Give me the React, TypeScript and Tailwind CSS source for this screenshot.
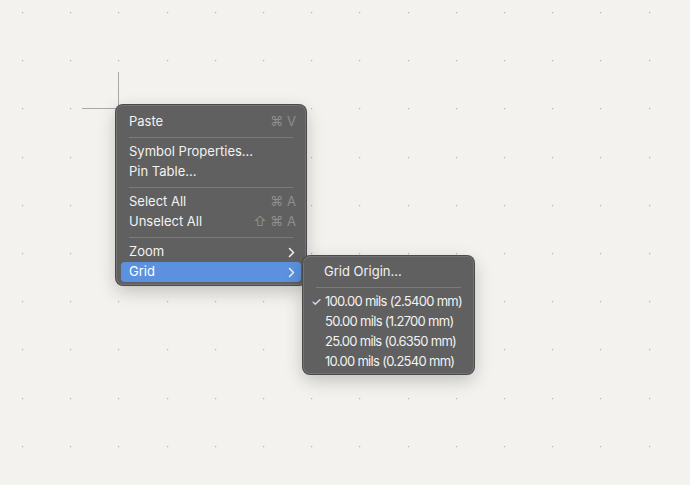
import React from "react";

const FONT = "font-['Inter','Noto_Sans','DejaVu_Sans',sans-serif]";

type Row =
  | { kind: "sep" }
  | { kind: "item"; label: string; keys?: string; sub?: boolean; active?: boolean };

const mainRows: Row[] = [
  { kind: "item", label: "Paste", keys: "⌘ V" },
  { kind: "sep" },
  { kind: "item", label: "Symbol Properties..." },
  { kind: "item", label: "Pin Table..." },
  { kind: "sep" },
  { kind: "item", label: "Select All", keys: "⌘ A" },
  { kind: "item", label: "Unselect All", keys: "⇧ ⌘ A" },
  { kind: "sep" },
  { kind: "item", label: "Zoom", sub: true },
  { kind: "item", label: "Grid", sub: true, active: true },
];

const gridSizes = [
  { label: "100.00 mils (2.5400 mm)", checked: true },
  { label: "50.00 mils (1.2700 mm)" },
  { label: "25.00 mils (0.6350 mm)" },
  { label: "10.00 mils (0.2540 mm)" },
];

const Chevron = () => (
  <svg width="7" height="11" viewBox="0 0 7 11" fill="none" className="mr-[1px]">
    <path d="M1.5 1.5 L5.5 5.5 L1.5 9.5" stroke="#f2f2f2" strokeWidth="1.5" strokeLinecap="round" strokeLinejoin="round" />
  </svg>
);

const Separator = ({ className = "" }: { className?: string }) => (
  <div className={`flex h-[10px] items-center ${className}`}>
    <div className="h-px w-full bg-[#7b7b7b]" />
  </div>
);

const menuBox =
  "absolute rounded-[7px] bg-[#606060] ring-1 ring-[#4a4a4a] shadow-[inset_0_0_0_1px_rgba(255,255,255,0.12),0_6px_18px_rgba(0,0,0,0.22)]";

export default function App() {
  const xs = Array.from({ length: 15 }, (_, i) => 22 + i * 48.2);
  const ys = Array.from({ length: 10 }, (_, j) => 12 + j * 48.2);

  return (
    <div className={`relative h-[485px] w-[690px] overflow-hidden bg-[#f3f2ee] ${FONT}`}>
      <svg className="absolute inset-0" width="690" height="485">
        {ys.map((y) =>
          xs.map((x) => (
            <rect key={`${x}-${y}`} x={Math.round(x)} y={Math.round(y)} width="1.2" height="1.2" fill="#b4b3ae" />
          ))
        )}
        <line x1="118.5" y1="72" x2="118.5" y2="108" stroke="#a8a8a8" strokeWidth="1" />
        <line x1="82" y1="108.5" x2="118" y2="108.5" stroke="#a8a8a8" strokeWidth="1" />
      </svg>

      {/* context menu */}
      <div className={`${menuBox} left-[116px] top-[105px] w-[190px] px-[5px] pt-[7px] pb-[3px]`}>
        {mainRows.map((row, i) =>
          row.kind === "sep" ? (
            <Separator key={i} className="px-[8px]" />
          ) : (
            <div
              key={i}
              className={`flex h-[20px] items-center justify-between whitespace-nowrap rounded-[4px] pl-[8px] pr-[5px] text-[13px] ${
                row.active ? "bg-[#5b91de] text-white" : "text-[#f2f2f2]"
              }`}
            >
              <span>{row.label}</span>
              {row.keys && <span className="text-[13px] text-[#8f8f8f]">{row.keys}</span>}
              {row.sub && <Chevron />}
            </div>
          )
        )}
      </div>

      {/* grid submenu */}
      <div className={`${menuBox} left-[303px] top-[256px] w-[171px] px-[5px] pt-[6px] pb-[2px]`}>
        <div className="flex h-[20px] items-center whitespace-nowrap pl-[16px] text-[13px] text-[#f2f2f2]">Grid Origin...</div>
        <Separator className="px-[8px]" />
        {gridSizes.map((g) => (
          <div key={g.label} className="flex h-[20px] items-center whitespace-nowrap text-[13px] text-[#f2f2f2]">
            <span className="w-[17px] shrink-0 pl-[3px] text-[12px]">{g.checked ? "✓" : ""}</span>
            <span className="tracking-[-0.7px]">{g.label}</span>
          </div>
        ))}
      </div>
    </div>
  );
}
